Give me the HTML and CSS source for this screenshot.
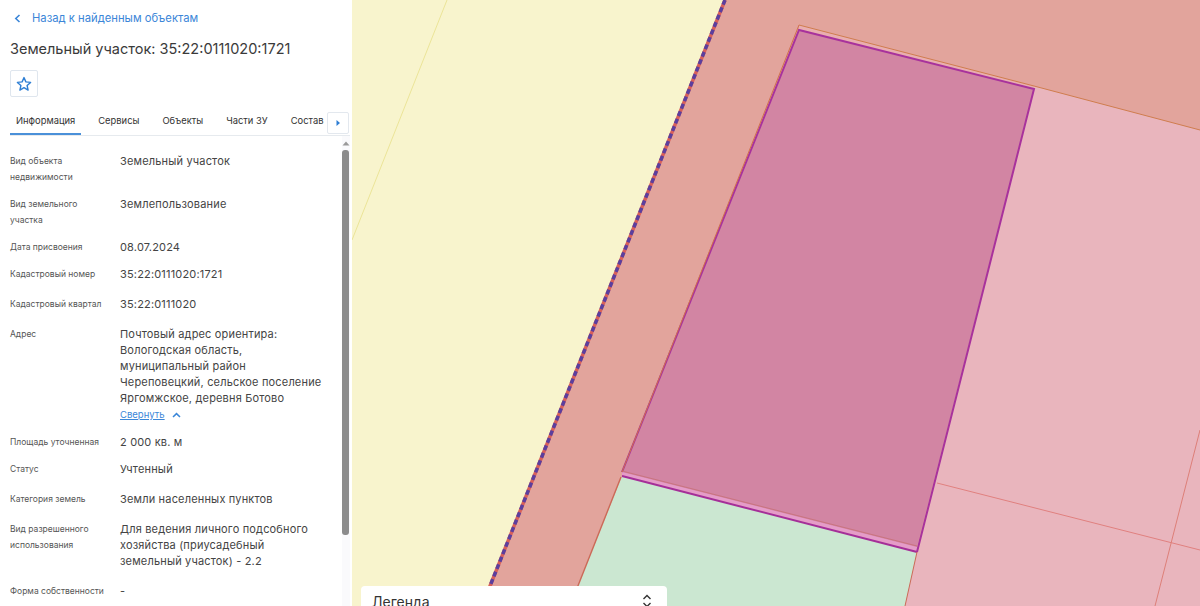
FILE: index.html
```html
<!DOCTYPE html>
<html lang="ru">
<head>
  <meta charset="UTF-8">
  <meta name="viewport" content="width=device-width, initial-scale=1.0">
  <title>Земельный участок: 35:22:0111020:1721</title>
  <link rel="stylesheet" href="styles.css">
</head>
<body>
  <div class="app">
    <aside class="sidebar">
      <a class="back-link" href="#">
        <svg class="back-icon" width="7" height="9" viewBox="0 0 7 9"><path d="M5.5 1 L1.8 4.5 L5.5 8" fill="none" stroke="#3b86d8" stroke-width="1.6"/></svg>
        Назад к найденным объектам
      </a>
      <h1 class="title">Земельный участок: 35:22:0111020:1721</h1>
      <button class="star-btn">
        <svg width="16" height="16" viewBox="0 0 16 16"><path d="M8 1.6 L9.9 5.9 L14.6 6.4 L11.1 9.5 L12.1 14.1 L8 11.7 L3.9 14.1 L4.9 9.5 L1.4 6.4 L6.1 5.9 Z" fill="none" stroke="#2f7fd4" stroke-width="1.4" stroke-linejoin="round"/></svg>
      </button>

      <div class="tabs">
        <a class="tab active">Информация</a>
        <a class="tab">Сервисы</a>
        <a class="tab">Объекты</a>
        <a class="tab">Части ЗУ</a>
        <a class="tab">Состав</a>
        <button class="tabs-next">
          <svg width="6" height="8" viewBox="0 0 6 8"><path d="M1.5 1 L5 4 L1.5 7 Z" fill="#2f7fd4"/></svg>
        </button>
      </div>

      <div class="info">
        <div class="scrollbar">
          <svg class="scroll-up" width="8" height="5" viewBox="0 0 8 5"><path d="M4 0.5 L7.5 4.5 L0.5 4.5 Z" fill="#9a9a9a"/></svg>
          <div class="scroll-thumb"></div>
        </div>
        <div class="row tight">
          <div class="label">Вид объекта недвижимости</div>
          <div class="value">Земельный участок</div>
        </div>
        <div class="row tight">
          <div class="label">Вид земельного участка</div>
          <div class="value">Землепользование</div>
        </div>
        <div class="row tight">
          <div class="label">Дата присвоения</div>
          <div class="value">08.07.2024</div>
        </div>
        <div class="row">
          <div class="label">Кадастровый номер</div>
          <div class="value">35:22:0111020:1721</div>
        </div>
        <div class="row">
          <div class="label">Кадастровый квартал</div>
          <div class="value">35:22:0111020</div>
        </div>
        <div class="row tight">
          <div class="label">Адрес</div>
          <div class="value">
            Почтовый адрес ориентира:<br>Вологодская область,<br>муниципальный район<br>Череповецкий, сельское поселение<br>Яргомжское, деревня Ботово
            <a class="collapse" href="#">Свернуть</a>
            <svg class="collapse-icon" width="9" height="6" viewBox="0 0 9 6"><path d="M1 5 L4.5 1.6 L8 5" fill="none" stroke="#3b86d8" stroke-width="1.5"/></svg>
          </div>
        </div>
        <div class="row tight">
          <div class="label">Площадь уточненная</div>
          <div class="value">2 000 кв. м</div>
        </div>
        <div class="row">
          <div class="label">Статус</div>
          <div class="value">Учтенный</div>
        </div>
        <div class="row">
          <div class="label">Категория земель</div>
          <div class="value">Земли населенных пунктов</div>
        </div>
        <div class="row">
          <div class="label">Вид разрешенного использования</div>
          <div class="value">Для ведения личного подсобного хозяйства (приусадебный земельный участок) - 2.2</div>
        </div>
        <div class="row">
          <div class="label">Форма собственности</div>
          <div class="value">-</div>
        </div>
      </div>
    </aside>

    <main class="map">
      <svg class="map-canvas" width="848" height="606" viewBox="352 0 848 606">
        <rect x="352" y="0" width="848" height="606" fill="#f8f4cd"/>
        <path d="M447 0 L352 240" stroke="#ebe498" stroke-width="1" fill="none"/>
        <!-- дорога -->
        <polygon points="725,0 1200,0 1200,606 482,606" fill="#e2a49c"/>
        <!-- соседний участок -->
        <polygon points="1034,86 1200,130 1200,606 905,606 917,552" fill="#e9b5bd"/>
        <polygon points="622,476 917,552 905,606 570,606" fill="#cbe7d1"/>
        <polygon points="799,25 1034,86 1034,89 799,30" fill="#e9aeb0"/>
        <polygon points="622,470 917,546 917,552 622,476" fill="#e59cc8"/>
        <!-- выбранный участок -->
        <polygon points="799,30 1034,89 917,547 622,472" fill="#d285a3"/>
        <path d="M622 476 L917 552" stroke="#a52f98" stroke-width="2" fill="none"/>
        <path d="M622 472 L799 30 L1034 89 L917 552" stroke="#a8329c" stroke-width="2" fill="none"/>
        <path d="M622 471 L917 546" stroke="#c9747f" stroke-width="1" fill="none"/>
        <!-- границы -->
        <path d="M799 25 L1034 86 L1200 130" stroke="#cf7d4e" stroke-width="1" fill="none"/>
        <path d="M799 25 L622 472" stroke="#d0704e" stroke-width="1" fill="none"/>
        <path d="M621 477 L570 606" stroke="#cb6a58" stroke-width="1.4" fill="none"/>
        <path d="M917 552 L905 606" stroke="#cb6a58" stroke-width="1" fill="none"/>
        <path d="M937 483 L1200 550" stroke="#e0807f" stroke-width="1" fill="none"/>
        <path d="M1200 430 L1155 606" stroke="#dd7f78" stroke-width="1" fill="none"/>
        <!-- пунктир -->
        <path d="M725 0 L482 606" stroke="#d8605a" stroke-width="3.5" fill="none"/>
        <path d="M725 0 L482 606" stroke="#5b3f9e" stroke-width="3.5" stroke-dasharray="5 3" fill="none"/>
      </svg>
      <div class="legend">
        <span class="legend-title">Легенда</span>
        <svg class="legend-toggle" width="8" height="16" viewBox="0 0 8 16"><path d="M0.5 7 L4 3.5 L7.5 7 M0.5 11 L4 14.5 L7.5 11" fill="none" stroke="#333" stroke-width="1.4"/></svg>
      </div>
    </main>
  </div>
</body>
</html>
```

FILE: styles.css
```css
html, body {
  margin: 0;
  height: 100%;
  overflow: hidden;
}
body {
  font-family: Inter, "Noto Sans", sans-serif;
  color: #333;
}
.app {
  display: flex;
  width: 1200px;
  height: 606px;
  overflow: hidden;
}
.sidebar {
  flex: 0 0 352px;
  position: relative;
  background: #fff;
  padding: 10px 0 0 10px;
  box-sizing: border-box;
}
.back-link {
  display: flex;
  align-items: center;
  height: 16px;
  font-size: 11.25px;
  color: #3b86d8;
  text-decoration: none;
}
.back-icon {
  margin: 0 11px 0 4px;
}
.title {
  margin: 13px 0 11px;
  font-size: 14.5px;
  line-height: 20px;
  font-weight: 400;
  color: #3a3a3a;
}
.star-btn {
  display: flex;
  align-items: center;
  justify-content: center;
  width: 28px;
  height: 27px;
  padding: 0;
  background: #fff;
  border: 1px solid #dfe6ee;
  border-radius: 2px;
}
.tabs {
  position: relative;
  display: flex;
  width: 340px;
  height: 38px;
  margin-top: 1px;
  border-bottom: 1px solid #e6eaee;
  box-sizing: border-box;
  overflow: hidden;
}
.tab {
  height: 37px;
  padding: 15px 6px 0;
  margin-right: 11px;
  box-sizing: border-box;
  font-size: 9.4px;
  line-height: 16px;
  white-space: nowrap;
  color: #333;
}
.tab.active {
  box-shadow: inset 0 -2px 0 #4a90d9;
}
.tabs-next {
  position: absolute;
  right: 1px;
  top: 14px;
  display: flex;
  align-items: center;
  justify-content: center;
  width: 22px;
  height: 22px;
  padding: 0;
  background: #fff;
  border: 1px solid #e3e8ee;
  border-radius: 2px;
}
.info {
  padding-top: 17px;
}
.scrollbar {
  position: absolute;
  top: 136px;
  right: 2px;
  bottom: 0;
  width: 8px;
  background: #fafafc;
}
.scroll-up {
  display: block;
  margin: 5px 0 0 0;
}
.scroll-thumb {
  width: 7px;
  height: 385px;
  margin-top: 4px;
  background: #8c8c8c;
  border-radius: 3px;
}
.row {
  display: grid;
  grid-template-columns: 110px 205px;
  padding-bottom: 14px;
}
.row.tight {
  padding-bottom: 11px;
}
.label {
  padding-right: 15px;
  font-size: 8.5px;
  line-height: 16px;
  color: #555;
}
.value {
  font-size: 11px;
  line-height: 16px;
  letter-spacing: 0.17px;
  color: #444;
}
.collapse {
  display: inline-block;
  margin-top: 1px;
  font-size: 9.5px;
  letter-spacing: 0;
  color: #3b86d8;
}
.collapse-icon {
  margin-left: 4px;
}
.map {
  position: relative;
  flex: 1;
  overflow: hidden;
}
.map-canvas {
  display: block;
}
.legend {
  position: absolute;
  left: 9px;
  top: 586px;
  display: flex;
  justify-content: space-between;
  width: 306px;
  height: 40px;
  padding: 6px 16px 0 11px;
  box-sizing: border-box;
  background: #fff;
  border-radius: 4px;
}
.legend-title {
  font-size: 14px;
  line-height: 20px;
}
```
